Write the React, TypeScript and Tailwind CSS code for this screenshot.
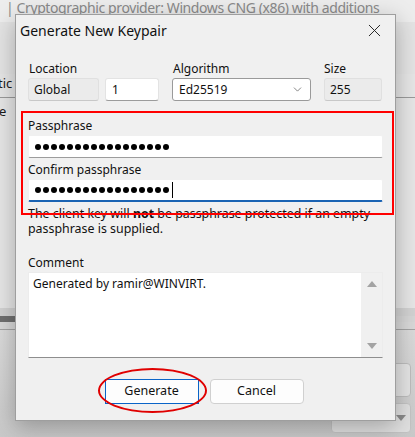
import { X, ChevronDown } from 'lucide-react'

const dots = Array.from({ length: 17 })

function Dots({ caret }: { caret?: boolean }) {
  return (
    <div className="flex items-center gap-[2px]">
      {dots.map((_, i) => (
        <span key={i} className="w-[6px] h-[6px] rounded-full bg-black" />
      ))}
      {caret && <span className="ml-[1px] w-px h-[16px] bg-black" />}
    </div>
  )
}

function Backdrop() {
  return (
    <div className="flex flex-col h-full text-[#1a1a1a]">
      <div className="h-[22px] bg-[#ededed] overflow-hidden">
        <div className="-mt-[3px] pl-[6px] text-[14px] tracking-[-0.4px] leading-[22px] text-[#8a8a8a] whitespace-nowrap">
          | <span className="underline decoration-[#b5b5b5]">Cryptographic provider: Windows CNG (x86) with additions</span>
        </div>
      </div>
      <div className="h-[52px] bg-[#e4e4e4]" />
      <div className="h-[24px] bg-[#e6e6e6] border-b border-[#9a9a9a] text-[13px] leading-[18px]">
        <span className="-ml-[2px]">tic</span>
      </div>
      <div className="h-[210px] bg-[#e6e6e6] text-[13px] leading-[20px] pt-[3px]">
        <span className="-ml-[1px]">e</span>
      </div>
      <div className="h-[8px] bg-[#d2d2d2]" />
      <div className="h-[6px] bg-[#d6d6d6] flex">
        <div className="w-[15px] bg-[#6f6f6f]" />
      </div>
      <div className="h-[8px] bg-[#d8d8d8] border-b border-[#a3a3a3]" />
      <div className="flex-1 bg-gradient-to-b from-[#dadada] to-[#c9c9c9] flex flex-col items-end pr-[4px] pt-[33px] gap-[6px]">
        <div className="w-[40px] h-[34px] rounded-[4px] border border-[#bdbdbd] bg-[#e4e4e4]" />
        <div className="w-[80px] h-[30px] rounded-[4px] border border-[#c4c4c4] bg-[#e0e0e0] flex items-center justify-end pr-[4px]">
          <span className="w-0 h-0 border-l-[5px] border-r-[5px] border-t-[6px] border-l-transparent border-r-transparent border-t-[#8a8a8a]" />
        </div>
      </div>
    </div>
  )
}

function ReadOnlyBox({ value, className }: { value: string; className: string }) {
  return (
    <div className={`h-[23px] bg-[#ebebeb] border border-[#e0e0e0] border-b-[#c8c8c8] rounded-[3px] px-[5px] flex items-center ${className}`}>
      {value}
    </div>
  )
}

function KeypairDialog() {
  return (
    <div className="absolute left-[15px] top-[14px] w-[381px] h-[407px] bg-[#f0f0f0] border border-[#9e9e9e] shadow-[0_6px_22px_rgba(0,0,0,0.28)] text-[12px] text-[#111] flex flex-col">
      <div className="h-[31px] flex items-center justify-between pl-[4px] pr-[10px]">
        <span className="text-[14px]">Generate New Keypair</span>
        <X className="w-[21px] h-[21px] text-[#222]" strokeWidth={1.1} />
      </div>

      <div className="flex flex-col px-[12px] pt-[15px]">
        <div className="flex">
          <div className="flex flex-col gap-[1px]">
            <span className="leading-[16px] pl-px">Location</span>
            <div className="flex gap-[6px]">
              <ReadOnlyBox value="Global" className="w-[71px]" />
              <div className="w-[54px] h-[23px] bg-white border border-[#e3e3e3] border-b-[#9c9c9c] rounded-[3px] px-[6px] flex items-center">1</div>
            </div>
          </div>
          <div className="flex flex-col gap-[1px] ml-[13px]">
            <span className="leading-[16px] pl-px">Algorithm</span>
            <div className="w-[139px] h-[23px] bg-white border border-[#9a9a9a] rounded-[3px] px-[6px] flex items-center justify-between">
              <span>Ed25519</span>
              <ChevronDown className="w-[13px] h-[13px] text-[#555]" strokeWidth={1.3} />
            </div>
          </div>
          <div className="flex flex-col gap-[1px] ml-[13px]">
            <span className="leading-[16px]">Size</span>
            <ReadOnlyBox value="255" className="w-[58px]" />
          </div>
        </div>

        <div className="flex flex-col mt-[17px]">
          <span className="leading-[16px]">Passphrase</span>
          <div className="mt-px h-[23px] bg-white border border-[#f0f0f0] border-b-[#9c9c9c] rounded-[2px] pl-[6px] flex items-center">
            <Dots />
          </div>
          <span className="leading-[16px] mt-[4px]">Confirm passphrase</span>
          <div className="mt-px h-[23px] bg-white border border-[#f0f0f0] border-b-2 border-b-[#1a63b3] rounded-[2px] pl-[6px] flex items-center">
            <Dots caret />
          </div>
          <p className="mt-[4px] leading-[15px] text-[12.4px]">
            The client key will <b>not</b> be passphrase protected if an empty
            <br />
            passphrase is supplied.
          </p>
        </div>

        <span className="leading-[16px] mt-[19px]">Comment</span>
        <div className="mt-px h-[86px] bg-white border border-[#ececec] border-b-[#8e8e8e] flex">
          <div className="flex-1 px-[4px] pt-[3px] leading-[16px]">Generated by ramir@WINVIRT.</div>
          <div className="w-[21px] bg-[#f0f0f0] flex flex-col items-center justify-between py-[8px]">
            <span className="w-0 h-0 border-l-[5px] border-r-[5px] border-b-[6px] border-l-transparent border-r-transparent border-b-[#a3a3a3]" />
            <span className="w-0 h-0 border-l-[5px] border-r-[5px] border-t-[6px] border-l-transparent border-r-transparent border-t-[#a3a3a3]" />
          </div>
        </div>

        <div className="flex justify-center gap-[11px] mt-[21px] pr-[3px] relative">
          <button className="w-[94px] h-[25px] bg-[#fdfdfd] border border-[#0a64c8] text-[12.5px]">Generate</button>
          <button className="w-[94px] h-[25px] bg-[#fdfdfd] border border-[#d0d0d0] rounded-[4px] text-[12.5px]">Cancel</button>
          <div className="absolute left-[70px] -top-[11px] w-[109px] h-[45px] rounded-[50%] border-[2.5px] border-[#e00000]" />
        </div>
      </div>

      <div className="absolute left-[5px] top-[96px] w-[373px] h-[104px] border-2 border-[#ff0000]" />
    </div>
  )
}

export default function App() {
  return (
    <div className="relative w-[415px] h-[437px] overflow-hidden font-['Noto_Sans',sans-serif]">
      <Backdrop />
      <KeypairDialog />
    </div>
  )
}
